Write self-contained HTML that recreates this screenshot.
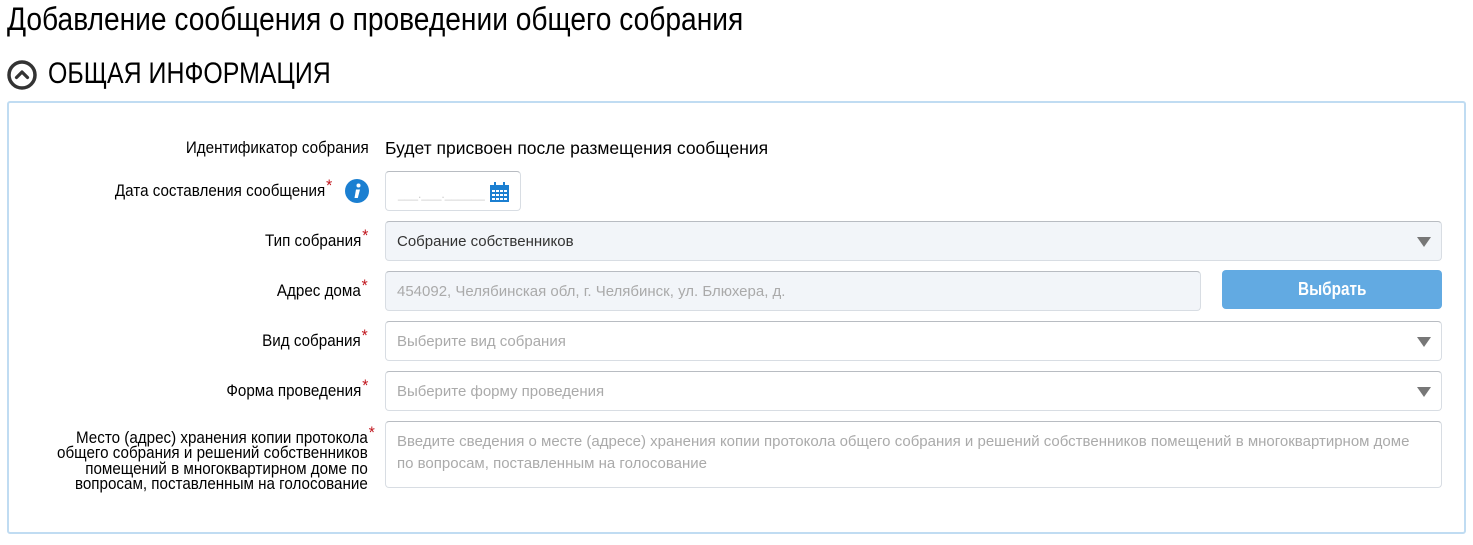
<!DOCTYPE html>
<html><head><meta charset="utf-8"><style>
body{margin:0;width:1473px;height:545px;background:#fff;position:relative;overflow:hidden;font-family:"Liberation Sans Narrow","Liberation Sans",sans-serif;color:#000}
.a{position:absolute;white-space:nowrap}
.h1{left:7px;top:1px;font-size:32px;transform:scaleX(0.88);transform-origin:left top}
.h2{left:48px;top:57px;font-size:30px;transform:scaleX(0.83);transform-origin:left top}
.panel{position:absolute;left:7px;top:101px;width:1459px;height:433px;border:2px solid #c0dcf2;border-radius:3px;box-sizing:border-box}
.lbl{font-size:16.5px;text-align:right;right:1105px;transform:scaleX(0.92);transform-origin:right top}
.st{color:#c0141c;font-size:17px;position:relative;top:-5px;margin-left:1px}
.box{position:absolute;border:1px solid #d8dde3;border-top-color:#b8bcc2;border-radius:4px;box-sizing:border-box;background:#fff;font-family:"Liberation Sans",sans-serif;font-size:15px;color:#aaa;padding-left:11px}
.gray{background:#f2f5f9}
.arr{position:absolute;right:10px;top:15px;width:0;height:0;border-left:7px solid transparent;border-right:7px solid transparent;border-top:10px solid #777}
</style></head><body>
<div class="a h1">Добавление сообщения о проведении общего собрания</div>
<svg class="a" style="left:6px;top:59px" width="32" height="32" viewBox="0 0 32 32"><circle cx="16" cy="16" r="13" fill="none" stroke="#333" stroke-width="3.5"/><path d="M10.5 18.5 L16 13 L21.5 18.5" fill="none" stroke="#333" stroke-width="3.2" stroke-linecap="round" stroke-linejoin="round"/></svg>
<div class="a h2">ОБЩАЯ ИНФОРМАЦИЯ</div>
<div class="panel"></div>

<div class="a lbl" style="top:139px;right:1104px">Идентификатор собрания</div>
<div class="a" style="left:385px;top:138px;font-size:17.5px">Будет присвоен после размещения сообщения</div>

<div class="a lbl" style="top:181px;right:1141px">Дата составления сообщения<span class="st">*</span></div>
<svg class="a" style="left:345px;top:179px" width="24" height="24" viewBox="0 0 24 24"><circle cx="12" cy="12" r="12" fill="#1b7fd1"/><circle cx="13.5" cy="6.5" r="2" fill="#fff"/><path d="M11 10.5h4l-2.2 8.5h-3.3z" fill="#fff"/></svg>
<div class="box" style="left:385px;top:171px;width:136px;height:40px"><span style="position:absolute;left:12px;top:15px;color:#ccc;font-size:12px">___.___.______</span>
<svg style="position:absolute;left:104px;top:10px" width="19" height="20" viewBox="0 0 19 20"><rect x="0" y="3" width="19" height="17" fill="#1b7fd1"/><rect x="4" y="0" width="2" height="5" fill="#1b7fd1"/><rect x="13" y="0" width="2" height="5" fill="#1b7fd1"/><g fill="#fff"><rect x="2" y="8" width="3" height="2"/><rect x="6" y="8" width="3" height="2"/><rect x="10" y="8" width="3" height="2"/><rect x="14" y="8" width="3" height="2"/><rect x="2" y="12" width="3" height="2"/><rect x="6" y="12" width="3" height="2"/><rect x="10" y="12" width="3" height="2"/><rect x="14" y="12" width="3" height="2"/><rect x="2" y="16" width="3" height="2"/><rect x="6" y="16" width="3" height="2"/><rect x="10" y="16" width="3" height="2"/><rect x="14" y="16" width="3" height="2"/></g></svg></div>

<div class="a lbl" style="top:231px">Тип собрания<span class="st">*</span></div>
<div class="box gray" style="left:385px;top:221px;width:1057px;height:40px;line-height:40px;color:#333">Собрание собственников<div class="arr"></div></div>

<div class="a lbl" style="top:281px">Адрес дома<span class="st">*</span></div>
<div class="box gray" style="left:385px;top:271px;width:816px;height:40px;line-height:40px;color:#aaa">454092, Челябинская обл, г. Челябинск, ул. Блюхера, д.</div>
<div class="a" style="left:1222px;top:270px;width:220px;height:39px;background:#62aae2;border-radius:4px;color:#fff;font-size:18px;text-align:center;line-height:39px"><span style="display:inline-block;transform:scaleX(0.85);font-weight:bold">Выбрать</span></div>

<div class="a lbl" style="top:331px">Вид собрания<span class="st">*</span></div>
<div class="box" style="left:385px;top:321px;width:1057px;height:40px;line-height:40px">Выберите вид собрания<div class="arr"></div></div>

<div class="a lbl" style="top:381px">Форма проведения<span class="st">*</span></div>
<div class="box" style="left:385px;top:371px;width:1057px;height:40px;line-height:40px">Выберите форму проведения<div class="arr"></div></div>

<div class="a lbl" style="top:430px;line-height:15.5px;right:1098px">Место (адрес) хранения копии протокола<span class="st" style="top:-5px">*</span></div>
<div class="a lbl" style="top:446px;line-height:15.5px">общего собрания и решений собственников<br>помещений в многоквартирном доме по<br>вопросам, поставленным на голосование</div>
<div class="box" style="left:385px;top:421px;width:1057px;height:67px;line-height:22px;padding-top:9px">Введите сведения о месте (адресе) хранения копии протокола общего собрания и решений собственников помещений в многоквартирном доме<br>по вопросам, поставленным на голосование</div>
</body></html>
